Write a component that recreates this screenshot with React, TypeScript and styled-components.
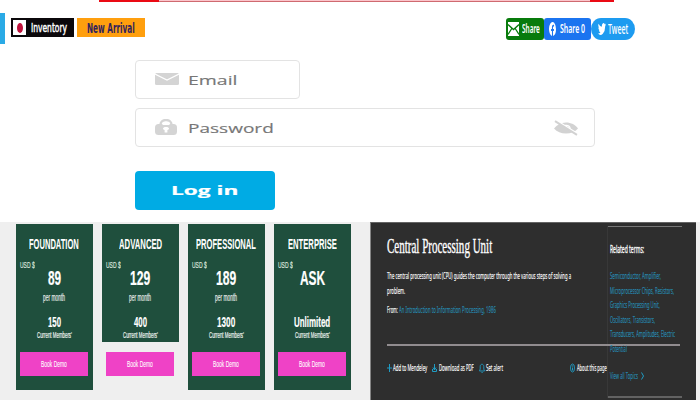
import React, { useLayoutEffect, useRef, useState } from 'react';
import styled, { createGlobalStyle } from 'styled-components';

const GlobalStyle = createGlobalStyle`
  * { box-sizing: border-box; }
  body { margin: 0; background: #fff; overflow: hidden; }
`;

const sans = "'Liberation Sans', sans-serif";
const noto = "'Noto Sans', sans-serif";
const open = "'Open Sans', sans-serif";
const dejavu = "'DejaVu Sans', sans-serif";
const serif = "'Liberation Serif', serif";

interface TypeProps {
  $w: number;
  $size: number;
  $line: number;
  $color?: string;
  $font?: string;
  $weight?: number;
  $stroke?: number;
  $top?: number;
  $left?: number;
  $start?: boolean;
}

const TextBox = styled.div<TypeProps>`
  flex: none;
  width: ${p => p.$w}px;
  height: ${p => p.$line}px;
  margin: ${p => p.$top ?? 0}px 0 0 ${p => p.$left ?? 0}px;
  align-self: ${p => (p.$start ? 'flex-start' : 'auto')};
  color: ${p => p.$color ?? '#fff'};
  font: ${p => p.$weight ?? 400} ${p => p.$size}px/${p => p.$line}px ${p => p.$font ?? sans};
  -webkit-text-stroke: ${p => p.$stroke ?? 0}px currentColor;
  white-space: nowrap;
`;

const Stretch = styled.span`
  display: inline-block;
  vertical-align: top;
  transform-origin: 0 50%;
`;

/* A single line of type set to an exact measure. */
function Line({ children, ...type }: TypeProps & { children: React.ReactNode }) {
  const ref = useRef<HTMLSpanElement>(null);
  const [scale, setScale] = useState(1);
  useLayoutEffect(() => {
    if (ref.current) setScale(type.$w / ref.current.offsetWidth);
  }, [type.$w]);
  return (
    <TextBox {...type}>
      <Stretch ref={ref} style={{ transform: `scaleX(${scale})` }}>{children}</Stretch>
    </TextBox>
  );
}

const Page = styled.main`
  width: 700px;
  height: 400px;
  overflow: hidden;
  background: #fff;
`;

const Alert = styled.div`
  display: flex;
  width: 515px;
  height: 2px;
  margin-left: 99px;
  background: #ea0a14;
  padding: 0 24px 0 60px;
`;
const AlertBody = styled.div`
  flex: 1;
  background: #fbc5cb;
  border-bottom: 1px solid #cf6a70;
`;

const TopBar = styled.header`
  display: flex;
  height: 31px;
  margin-top: 11px;
  padding-top: 5px;
`;
const Accent = styled.div`
  width: 5px;
  height: 31px;
  margin: -5px 6px 0 0;
  background: #2aaae6;
`;
const Tag = styled.div<{ $bg: string; $width: number; $gap: number }>`
  display: flex;
  align-items: center;
  width: ${p => p.$width}px;
  height: 19px;
  margin-right: 3px;
  padding-left: ${p => p.$gap}px;
  background: ${p => p.$bg};
`;
const Flag = styled.div`
  display: flex;
  align-items: center;
  justify-content: center;
  width: 13px;
  height: 15px;
  background: #fff;
  &::after {
    content: '';
    width: 6px;
    height: 10px;
    border-radius: 50%;
    background: #c0123c;
  }
`;
const Shares = styled.div`
  display: flex;
  margin-left: auto;
  margin-right: 65px;
`;
const ShareButton = styled.div<{ $bg: string; $width: number; $radius: string; $gap: number }>`
  display: flex;
  align-items: center;
  width: ${p => p.$width}px;
  height: 22px;
  padding-left: ${p => p.$gap}px;
  border-radius: ${p => p.$radius};
  background: ${p => p.$bg};
`;

const Form = styled.form`
  height: 178px;
  padding: 15.5px 0 0 135px;
`;
const Field = styled.div<{ $width: number }>`
  display: flex;
  align-items: center;
  width: ${p => p.$width}px;
  height: 39px;
  margin-bottom: 9px;
  padding-left: 19px;
  border: 1px solid #e3e3e3;
  border-radius: 4px;
`;
const IconSlot = styled.div`
  display: flex;
  align-items: center;
  width: 33px;
`;
const EyeSlot = styled.div`
  display: flex;
  margin: 2px 16px 0 auto;
`;
const LoginButton = styled.div`
  display: flex;
  align-items: center;
  width: 140px;
  height: 39px;
  margin-top: 24px;
  padding-left: 36px;
  border-radius: 4px;
  background: #00abe4;
`;

const Lower = styled.div`
  display: flex;
  height: 178px;
  background: #efefef;
`;
const Plans = styled.section`
  display: flex;
  gap: 9px;
  width: 370px;
  padding: 2px 0 0 16px;
`;
const Plan = styled.article<{ $fill: number }>`
  display: flex;
  flex-direction: column;
  align-items: center;
  width: 77px;
  height: 166px;
  padding-right: 1px;
  background: linear-gradient(#1f4f3d, #1f4f3d) no-repeat 0 0 / 100% ${p => p.$fill}px;
`;
const DemoButton = styled.div`
  display: flex;
  align-items: center;
  justify-content: center;
  width: 68px;
  height: 24px;
  margin-top: 12px;
  background: #ef42c6;
`;

const Topic = styled.section`
  position: relative;
  display: flex;
  width: 326px;
  background: #2e2e2e;
  border-left: 1px solid #858585;
  border-top: 1px solid #646464;
`;
const Article = styled.div`
  width: 237px;
  padding: 14px 0 0 16px;
`;
const Row = styled.div<{ $top?: number }>`
  display: flex;
  align-items: center;
  margin-top: ${p => p.$top ?? 0}px;
`;
const Rule = styled.div`
  position: absolute;
  left: 16px;
  top: 121px;
  width: 293px;
  height: 2px;
  background: #918c8f;
`;
const Related = styled.aside`
  width: 74px;
  height: 172px;
  margin-top: 3px;
  padding: 13px 0 0 2px;
  border-top: 1px solid #777;
  border-bottom: 2px solid #626262;
  box-shadow: -1px 0 #383838;
`;
const IconGap = styled.span<{ $width: number; $left?: number }>`
  display: flex;
  align-items: center;
  flex: none;
  width: ${p => p.$width}px;
  margin-left: ${p => p.$left ?? 0}px;
`;

const plans = [
  { name: 'FOUNDATION', nw: 50, price: '89', pw: 13, month: true, count: '150', cw: 13, fill: 166 },
  { name: 'ADVANCED', nw: 43, price: '129', pw: 20, month: true, count: '400', cw: 13, fill: 118 },
  { name: 'PROFESSIONAL', nw: 60, price: '189', pw: 20, month: true, count: '1300', cw: 18, fill: 166 },
  { name: 'ENTERPRISE', nw: 49, price: 'ASK', pw: 25, month: false, count: 'Unlimited', cw: 36, fill: 166 },
];

const related: [string, number][] = [
  ['Semiconductor, Amplifier,', 51],
  ['Microprocessor Chips, Resistors,', 64],
  ['Graphics Processing Unit,', 50],
  ['Oscillators, Transistors,', 45],
  ['Transducers, Amplitudes, Electric', 65],
  ['Potential', 17],
];

const teal = '#1f9cc4';
const link = '#288bb1';

export default function App() {
  return (
    <Page>
      <GlobalStyle />
      <Alert><AlertBody /></Alert>
      <TopBar>
        <Accent />
        <Tag $bg="#0b080b" $width={63} $gap={2}>
          <Flag />
          <Line $w={36} $size={13} $line={19} $left={5} $font={dejavu} $stroke={0.5}>Inventory</Line>
        </Tag>
        <Tag $bg="#ff9f0e" $width={68} $gap={10}>
          <Line $w={48} $size={13.5} $line={19} $top={1} $font={dejavu} $weight={700} $color="#33235c">New Arrival</Line>
        </Tag>
        <Shares>
          <ShareButton $bg="#087b0c" $width={38} $radius="3px" $gap={2}>
            <svg width="11" height="14" viewBox="0 0 11 14">
              <path d="M0 0h11v14H0z" fill="#fff" />
              <path d="M0 2.5l5.5 5 5.5-5M0 12.5l3.8-6M11 12.5l-3.8-6" fill="none" stroke="#087b0c" strokeWidth="1.3" />
            </svg>
            <Line $w={18} $size={12.5} $line={22} $left={3} $font={noto} $weight={600}>Share</Line>
          </ShareButton>
          <ShareButton $bg="#1b74f0" $width={47} $radius="3px" $gap={5}>
            <svg width="7" height="14" viewBox="0 0 24 24" preserveAspectRatio="none">
              <path fill="#fff" d="M24 12a12 12 0 1 0-13.9 11.9v-8.4H7V12h3.1V9.4c0-3 1.8-4.7 4.5-4.7 1.300 0 2.700.2 2.700.2v3h-1.500c-1.500 0-2 .9-2 1.900V12h3.400l-.5 3.500h-2.900v8.400A12 12 0 0 0 24 12z" />
            </svg>
            <Line $w={25} $size={12.5} $line={22} $left={4} $font={noto} $weight={600}>Share 0</Line>
          </ShareButton>
          <ShareButton $bg="#1d9bf0" $width={44} $radius="10px / 11px" $gap={7}>
            <svg width="8" height="12" viewBox="0 2 24 20" preserveAspectRatio="none">
              <path fill="#fff" d="M24 4.600a10 10 0 0 1-2.800.8 5 5 0 0 0 2.100-2.700 10 10 0 0 1-3.100 1.200 4.900 4.900 0 0 0-8.400 4.500A14 14 0 0 1 1.700 3.100a4.900 4.900 0 0 0 1.500 6.600 5 5 0 0 1-2.200-.6 4.900 4.900 0 0 0 3.900 4.900 5 5 0 0 1-2.200.1 4.900 4.900 0 0 0 4.600 3.400A10 10 0 0 1 0 19.500 14 14 0 0 0 21.500 7.100 10 10 0 0 0 24 4.600z" />
            </svg>
            <Line $w={20} $size={14} $line={20} $left={2} $font={noto} $weight={500}>Tweet</Line>
          </ShareButton>
        </Shares>
      </TopBar>

      <Form>
        <Field $width={165}>
          <IconSlot>
            <svg width="24" height="12" viewBox="0 0 24 12">
              <rect width="24" height="12" rx="1.500" fill="#d4d4d4" />
              <path d="M0 1l12 6 12-6" fill="none" stroke="#fff" strokeWidth="1.200" />
            </svg>
          </IconSlot>
          <Line $w={49} $size={13.5} $line={20} $top={2} $font={open} $weight={500} $stroke={0.15} $color="#777">Email</Line>
        </Field>
        <Field $width={460}>
          <IconSlot>
            <svg width="22" height="16" viewBox="0 0 22 16">
              <path d="M5.500 7V5.500c0-6 11-6 11 0V7" fill="none" stroke="#d4d4d4" strokeWidth="2.400" />
              <rect y="5" width="22" height="11" rx="3.500" fill="#d4d4d4" />
              <path d="M7.500 6V5.200c0-3.200 7-3.200 7 0V6z" fill="#fff" />
              <path d="M11 8c-1.800 0-3 .7-3 1.600 0 .7.700 1.200 1.600 1.400v2.600h2.800V11c.9-.2 1.600-.7 1.600-1.400C14 8.700 12.800 8 11 8z" fill="#fff" />
            </svg>
          </IconSlot>
          <Line $w={86} $size={13.5} $line={20} $top={2} $font={open} $weight={500} $stroke={0.15} $color="#777">Password</Line>
          <EyeSlot>
            <svg width="24" height="16" viewBox="0 0 24 16">
              <path d="M0 8.500C3 4.800 7 2.500 12 2.500s9.500 2.300 12 6c-3 3.500-7 5-12 5S3 11.800 0 8.500z" fill="#d2d2d2" />
              <path d="M11 5.500c3-.6 5.500 1 5 3.500" fill="none" stroke="#fff" strokeWidth="1.300" />
              <path d="M0 -.8l24 15" stroke="#fff" strokeWidth="2" />
              <path d="M1 1.200l22 13.600" stroke="#d2d2d2" strokeWidth="2" />
            </svg>
          </EyeSlot>
        </Field>
        <LoginButton>
          <Line $w={68} $size={13} $line={20} $font={open} $weight={700} $stroke={0.2}>Log in</Line>
        </LoginButton>
      </Form>

      <Lower>
        <Plans>
          {plans.map(p => (
            <Plan key={p.name} $fill={p.fill}>
              <Line $w={p.nw} $size={14.2} $line={14} $top={13} $weight={700}>{p.name}</Line>
              <Line $w={15} $size={9} $line={10} $top={9} $left={4} $start $stroke={0.2} $color="#dbe4df">USD $</Line>
              <Line $w={p.pw} $size={20} $line={18} $top={-1} $weight={700} $stroke={0.2}>{p.price}</Line>
              <Line $w={22} $size={10} $line={10} $top={6} $stroke={0.2} $color="#e5ebe7">{p.month ? 'per month' : '\u00a0'}</Line>
              <Line $w={p.cw} $size={15} $line={14} $top={12} $weight={700} $stroke={0.2}>{p.count}</Line>
              <Line $w={35} $size={8.5} $line={10} $top={1} $stroke={0.2} $color="#edf3ef">Current Members'</Line>
              <DemoButton>
                <Line $w={26} $size={9.5} $line={12} $stroke={0.1}>Book Demo</Line>
              </DemoButton>
            </Plan>
          ))}
        </Plans>

        <Topic>
          <Article>
            <Line $w={105} $size={21.5} $line={19} $font={serif} $stroke={0.4}>Central Processing Unit</Line>
            <Line $w={184} $size={9.5} $line={14} $top={13} $font={noto} $stroke={0.15}>The central processing unit (CPU) guides the computer through the various steps of solving a</Line>
            <Line $w={18} $size={9.5} $line={14} $top={1} $font={noto} $stroke={0.15}>problem.</Line>
            <Row $top={5}>
              <Line $w={11} $size={9.5} $line={14} $font={noto} $stroke={0.15}>From:</Line>
              <Line $w={97} $size={9.5} $line={14} $left={1} $font={noto} $stroke={0.15} $color={link}>An Introduction to Information Processing, 1986</Line>
            </Row>
            <Row $top={44}>
              <IconGap $width={6}>
                <svg width="5" height="10" viewBox="0 0 5 10"><path d="M2.500 1v8M0 5h5" stroke={teal} fill="none" /></svg>
              </IconGap>
              <Line $w={34} $size={9.5} $line={14} $font={noto} $stroke={0.15}>Add to Mendeley</Line>
              <IconGap $width={7} $left={5}>
                <svg width="5" height="10" viewBox="0 0 5 10"><path d="M2.500 1v6M1 4.500l1.500 2.500L4 4.500M.5 6v2.500h4V6" stroke={teal} fill="none" /></svg>
              </IconGap>
              <Line $w={35} $size={9.5} $line={14} $font={noto} $stroke={0.15}>Download as PDF</Line>
              <IconGap $width={7} $left={5}>
                <svg width="6" height="11" viewBox="0 0 6 11"><path d="M.5 8L1.200 6V3.500c0-3 3.600-3 3.600 0V6l.7 2zM2.500 9.500h1.200" stroke={teal} fill="none" strokeWidth=".9" /></svg>
              </IconGap>
              <Line $w={17} $size={9.5} $line={14} $font={noto} $stroke={0.15}>Set alert</Line>
              <IconGap $width={7} $left={67}>
                <svg width="5" height="10" viewBox="0 0 5 10"><ellipse cx="2.500" cy="5" rx="2" ry="4" stroke={teal} fill="none" strokeWidth=".9" /><path d="M2.500 4.500v3M2.500 2.500v1" stroke={teal} /></svg>
              </IconGap>
              <Line $w={30} $size={9.5} $line={14} $font={noto} $stroke={0.15}>About this page</Line>
            </Row>
          </Article>
          <Rule />
          <Related>
            <Line $w={34} $size={10} $line={18} $font={noto} $stroke={0.3}>Related terms:</Line>
            <Row $top={11} />
            {related.map(([text, width]) => (
              <Line key={text} $w={width} $size={9.5} $line={14.6} $font={noto} $stroke={0.15} $color={link}>{text}</Line>
            ))}
            <Row $top={12}>
              <Line $w={28} $size={9.5} $line={14} $font={noto} $stroke={0.15} $color={link}>View all Topics</Line>
              <IconGap $width={3} $left={3}>
                <svg width="3" height="8" viewBox="0 0 3 8"><path d="M.5 .5l2 3.500-2 3.500" stroke={teal} fill="none" /></svg>
              </IconGap>
            </Row>
          </Related>
        </Topic>
      </Lower>
    </Page>
  );
}
